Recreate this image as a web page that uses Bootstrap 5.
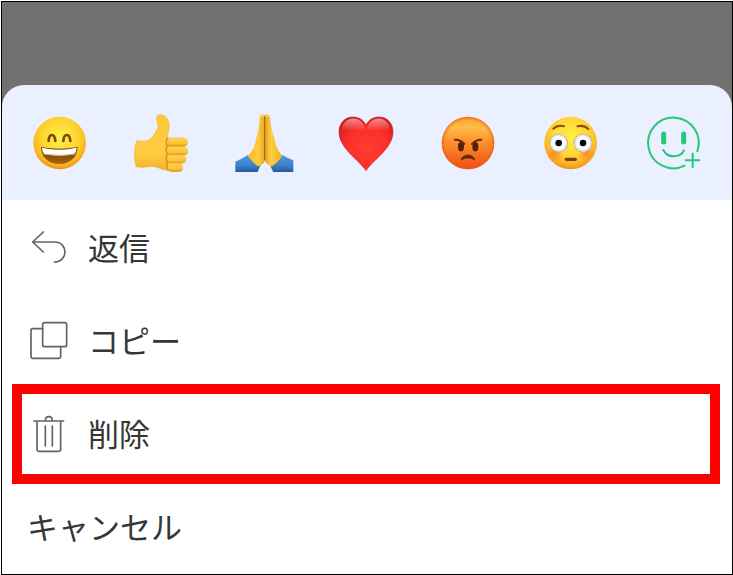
<!DOCTYPE html>
<html lang="ja">
<head>
<meta charset="utf-8">
<meta name="viewport" content="width=device-width, initial-scale=1">
<title>メッセージメニュー</title>
<link href="https://cdn.jsdelivr.net/npm/bootstrap@5.3.0/dist/css/bootstrap.min.css" rel="stylesheet">
<style>
  body { font-family: "Noto Sans CJK JP", sans-serif; color: #363636; background: #fff; padding: 1px 0 0 1px; }
  .screen { border: 1px solid #000; background: #fff; min-height: calc(100vh - 1px); }
  .backdrop { background: #71716f; padding-top: 83px; }
  .reactions { background: #eaf0ff; border-radius: 22px 22px 0 0; padding: 28px 28px 27px; }
  .reactions svg { width: 60px; height: 60px; display: block; }
  .actions { padding-top: 1px; }
  .action { font-size: 31px; line-height: 38px; padding: 27px 27px 26px; gap: 19px; color: #363636; border-radius: 0; }
  .action svg { width: 40px; height: 40px; flex: none; fill: none; stroke: #62626c; stroke-width: 5; stroke-linecap: round; stroke-linejoin: round; }
  .label-text { padding-bottom: 2px; }
  .cancel { padding-left: 25px; }
  .highlight { position: absolute; inset: -3px 12px -4px 10px; border: 10px solid #f00; pointer-events: none; }
</style>
<script src="https://cdn.jsdelivr.net/npm/bootstrap@5.3.0/dist/js/bootstrap.bundle.min.js"></script>
</head>
<body>
<main class="screen d-flex flex-column">
  <div class="backdrop">
    <div class="reactions d-flex justify-content-between" role="group" aria-label="リアクション">
      <button type="button" class="btn p-0 border-0" aria-label="笑顔">
        <svg viewBox="30 24 180 180">
          <defs>
            <radialGradient id="joy" cx=".5" cy=".4" r=".6"><stop offset="0" stop-color="#fff04a"/><stop offset=".6" stop-color="#ffd32e"/><stop offset=".87" stop-color="#fcb21d"/><stop offset="1" stop-color="#ee8f16"/></radialGradient>
            <linearGradient id="mouth" x2="0" y2="1"><stop offset="0" stop-color="#6b3b05"/><stop offset="1" stop-color="#a8650c"/></linearGradient>
          </defs>
          <circle cx="119" cy="114" r="79" fill="url(#joy)"/>
          <path d="M86 108C87 84 104 84 106 108M130 108C132 84 149 84 151 108" fill="none" stroke="#7c4a0c" stroke-width="8" stroke-linecap="round"/>
          <path d="M63 126Q118 137 173 126C172 157 151 177 118 177S64 157 63 126Z" fill="url(#mouth)"/>
          <path d="M66 128Q118 140 170 128Q170 139 164 147Q118 156 72 147Q66 139 66 128Z" fill="#fff"/>
          <path d="M72 147Q118 156 164 147" fill="none" stroke="#c9b9a6" stroke-width="3"/>
        </svg>
      </button>
      <button type="button" class="btn p-0 border-0" aria-label="いいね">
        <svg viewBox="22 24 180 180">
          <defs>
            <linearGradient id="thumb" x2="0" y2="1"><stop offset="0" stop-color="#ffc936"/><stop offset=".7" stop-color="#ffcb42"/><stop offset="1" stop-color="#f5ae25"/></linearGradient>
            <linearGradient id="finger" x2="0" y2="1"><stop offset="0" stop-color="#ffd252"/><stop offset=".65" stop-color="#fdc237"/><stop offset="1" stop-color="#dc9318"/></linearGradient>
          </defs>
          <path d="M36 107Q55 110 69 108C84 98 98 78 100 66C100 55 96 48 96 40C96 27 111 27 120 34C132 43 136 60 132 76Q128 91 129 99H169V197Q143 201 124 195C105 193 97 183 78 184Q56 189 34 185Q24 145 36 107Z" fill="url(#thumb)" stroke="#efb12c" stroke-width="2"/>
          <path d="M131 99Q121 108 128 124Q121 133 128 149Q122 157 128 173Q124 187 132 196" fill="none" stroke="#d9941f" stroke-width="5"/>
          <rect x="127" y="98" width="63" height="27" rx="13" fill="url(#finger)"/>
          <rect x="128" y="125" width="63" height="26" rx="13" fill="url(#finger)"/>
          <rect x="128" y="151" width="57" height="24" rx="12" fill="url(#finger)"/>
          <rect x="129" y="175" width="46" height="25" rx="12" fill="url(#finger)"/>
        </svg>
      </button>
      <button type="button" class="btn p-0 border-0" aria-label="お願い">
        <svg viewBox="29 24 180 180">
          <defs>
            <linearGradient id="palmL"><stop offset="0" stop-color="#f6b626"/><stop offset=".6" stop-color="#ffcc3e"/><stop offset="1" stop-color="#eba521"/></linearGradient>
            <linearGradient id="palmR"><stop offset="0" stop-color="#e9a01e"/><stop offset=".35" stop-color="#ffcc42"/><stop offset="1" stop-color="#f5b024"/></linearGradient>
            <linearGradient id="sleeve" x2="0" y2="1"><stop offset="0" stop-color="#4a9be6"/><stop offset=".6" stop-color="#3e82c9"/><stop offset="1" stop-color="#235b99"/></linearGradient>
          </defs>
          <path d="M30 170Q48 162 68 150L106 180L97 201H30Z" fill="url(#sleeve)"/>
          <path d="M204 166Q188 160 171 150L133 180L144 201H204Z" fill="url(#sleeve)"/>
          <path d="M118 30Q111 26 105 31C101 44 102 67 97 84C92 98 91 116 84 131L68 154Q82 174 99 184C109 180 119 174 119 165Z" fill="url(#palmL)"/>
          <path d="M119 30Q126 26 132 31C137 46 137 70 143 89C150 104 149 120 158 135L171 153Q157 174 139 184C129 179 120 174 119 165Z" fill="url(#palmR)"/>
          <path d="M118 34V164" fill="none" stroke="#9a5d0b" stroke-width="3" stroke-linecap="round"/>
          <path d="M107 35Q112 30 117 35M121 35Q126 30 131 35" fill="none" stroke="#ffe07c" stroke-width="4"/>
        </svg>
      </button>
      <button type="button" class="btn p-0 border-0" aria-label="ハート">
        <svg viewBox="36 24 180 180">
          <defs>
            <radialGradient id="heart" cx=".52" cy=".6" r=".65"><stop offset="0" stop-color="#ff3c32"/><stop offset=".65" stop-color="#fa2e28"/><stop offset="1" stop-color="#d51a1c"/></radialGradient>
            <linearGradient id="shine" x2="0" y2="1"><stop offset="0" stop-color="#fff" stop-opacity=".5"/><stop offset=".9" stop-color="#fff" stop-opacity="0"/></linearGradient>
          </defs>
          <path d="M123 60C114 42 99 36 83 36C58 36 42 57 42 80C42 130 100 162 123 197C146 162 204 130 204 80C204 57 188 36 163 36C147 36 132 42 123 60Z" fill="url(#heart)" stroke="#c92022" stroke-width="2"/>
          <path d="M50 82C50 31 107 29 118 66L123 82ZM123 82L128 66C139 29 196 31 196 82Z" fill="url(#shine)"/>
        </svg>
      </button>
      <button type="button" class="btn p-0 border-0" aria-label="怒り">
        <svg viewBox="28 24 180 180">
          <defs>
            <linearGradient id="angry" x2="0" y2="1"><stop offset="0" stop-color="#ffa534"/><stop offset=".2" stop-color="#ffbc4a"/><stop offset=".5" stop-color="#fc8e2a"/><stop offset="1" stop-color="#ee4d14"/></linearGradient>
            <radialGradient id="rim"><stop offset=".85" stop-color="#ef6514" stop-opacity="0"/><stop offset="1" stop-color="#e9560f" stop-opacity=".7"/></radialGradient>
          </defs>
          <circle cx="115" cy="114" r="79" fill="url(#angry)"/><circle cx="115" cy="114" r="79" fill="url(#rim)"/>
          <ellipse cx="94" cy="125" rx="9" ry="14" fill="#53200a"/><ellipse cx="137" cy="125" rx="9" ry="14" fill="#53200a"/>
          <path d="M76 104Q94 104 104 117M155 104Q137 104 127 117" fill="none" stroke="#6b2808" stroke-width="6" stroke-linecap="round"/>
          <path d="M94 165C99 145 130 145 136 165Q115 153 94 165Z" fill="#662709" stroke="#662709" stroke-width="2" stroke-linejoin="round"/>
        </svg>
      </button>
      <button type="button" class="btn p-0 border-0" aria-label="びっくり">
        <svg viewBox="35 24 180 180">
          <defs>
            <radialGradient id="flush" cx=".5" cy=".38" r=".64"><stop offset="0" stop-color="#fff047"/><stop offset=".55" stop-color="#ffd633"/><stop offset=".85" stop-color="#fbac22"/><stop offset="1" stop-color="#ee8518"/></radialGradient>
            <radialGradient id="cheek"><stop offset="0" stop-color="#ff6a26" stop-opacity=".65"/><stop offset="1" stop-color="#ff6a26" stop-opacity="0"/></radialGradient>
            <radialGradient id="eye"><stop offset=".65" stop-color="#fff"/><stop offset=".88" stop-color="#dedfe0"/><stop offset="1" stop-color="#a59b86"/></radialGradient>
          </defs>
          <circle cx="121" cy="114" r="79" fill="url(#flush)"/>
          <ellipse cx="73" cy="146" rx="26" ry="23" fill="url(#cheek)"/><ellipse cx="169" cy="146" rx="26" ry="23" fill="url(#cheek)"/>
          <circle cx="85" cy="114" r="28" fill="url(#eye)"/><circle cx="158" cy="114" r="28" fill="url(#eye)"/>
          <circle cx="85" cy="114" r="10" fill="#080808"/><circle cx="158" cy="114" r="10" fill="#080808"/>
          <path d="M69 71Q82 59 101 64M141 64Q161 59 174 72" fill="none" stroke="#8a4d0b" stroke-width="6" stroke-linecap="round"/>
          <rect x="103" y="158" width="37" height="10" rx="5" fill="#7e410d"/>
        </svg>
      </button>
      <button type="button" class="btn p-0 border-0" aria-label="リアクションを追加">
        <svg viewBox="27 24 180 180" fill="none" stroke="#27c678" stroke-width="6" stroke-linecap="round">
          <path d="M187 139A76 76 0 1 0 149 182"/>
          <path d="M86 87V111M146 87V111" stroke-width="15"/>
          <path d="M85 135C97 160 135 160 147 136"/>
          <path d="M173 146V187M152 166H193"/>
        </svg>
      </button>
    </div>
  </div>
  <div class="actions d-flex flex-column">
    <button type="button" class="action btn border-0 d-flex align-items-center text-start">
      <svg viewBox="87 39 120 120" aria-hidden="true"><path d="M130 51L98 81L130 111M98 81H164C205 81 205 141 163 141"/></svg>
      <span class="label-text">返信</span>
    </button>
    <button type="button" class="action btn border-0 d-flex align-items-center text-start">
      <svg viewBox="87 318 120 120" aria-hidden="true"><rect x="128" y="323" width="72" height="72" rx="6"/><path d="M128 341H99Q93 341 93 347V424Q93 430 99 430H176Q182 430 182 424V395"/></svg>
      <span class="label-text">コピー</span>
    </button>
    <button type="button" class="action btn border-0 d-flex align-items-center text-start position-relative">
      <svg viewBox="87 117 120 120" aria-hidden="true"><path d="M101 138H191M111 138V223Q111 229 117 229H176Q182 229 182 223V138M136 137C136 121 157 121 157 137M136 153V213M157 153V213"/></svg>
      <span class="label-text">削除</span>
      <span class="highlight"></span>
    </button>
    <button type="button" class="action cancel btn border-0 d-flex align-items-center text-start"><span class="label-text">キャンセル</span></button>
  </div>
</main>
</body>
</html>
